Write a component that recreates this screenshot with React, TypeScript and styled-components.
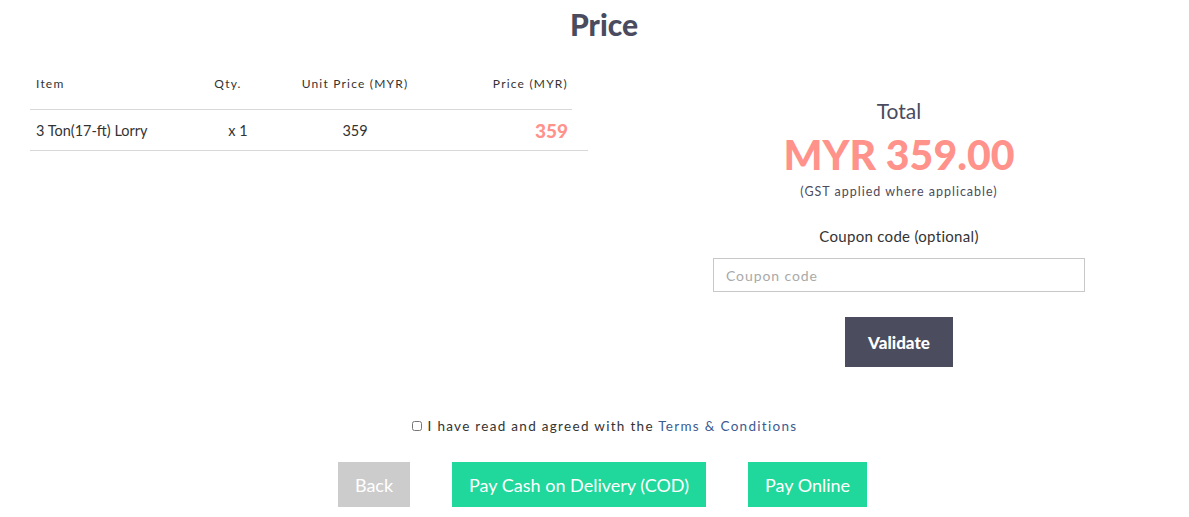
import React from "react";
import styled, { createGlobalStyle } from "styled-components";

const GlobalStyle = createGlobalStyle`
    body {
        margin: 0;
        background: #ffffff;
        font-family: "Lato", "Noto Sans", sans-serif;
        color: #333333;
    }
`;

const Page = styled.div`
    width: 1189px;
    padding-top: 6px;
`;

const Title = styled.h1`
    margin: 0;
    padding-left: 19px;
    text-align: center;
    font-size: 30px;
    font-weight: 900;
    color: #4a4b5e;
    line-height: 36px;
`;

const Main = styled.div`
    display: flex;
    margin-top: 21px;
`;

const Left = styled.div`
    width: 558px;
    margin-left: 30px;
`;

const Right = styled.div`
    flex: 1;
    padding-left: 21px;
    display: flex;
    flex-direction: column;
    align-items: center;
    padding-top: 35px;
`;

const Table = styled.div`
    display: flex;
    flex-direction: column;
`;

interface RowProps {
    lineWidth: string;
    tall?: boolean;
}
const Row = styled.div<RowProps>`
    box-sizing: border-box;
    display: grid;
    grid-template-columns: 150px 96px 158px 134px;
    align-items: center;
    width: ${(props) => props.lineWidth};
    border-bottom: 1px solid #d8d8d8;
    height: ${(props) => (props.tall ? "47px" : "41px")};
    padding-bottom: ${(props) => (props.tall ? "6px" : "0")};
`;

interface CellProps {
    align?: string;
    header?: boolean;
    strong?: boolean;
    shift?: string;
}
const Cell = styled.div<CellProps>`
    text-align: ${(props) => props.align || "left"};
    padding-left: ${(props) => props.shift || (props.align ? "0" : "6px")};
    font-size: ${(props) => (props.header ? "12px" : props.strong ? "19px" : "14.5px")};
    font-weight: ${(props) => (props.strong ? 900 : 400)};
    letter-spacing: ${(props) => (props.header ? "1.2px" : "0")};
    color: ${(props) => (props.strong ? "#ff928a" : "#333333")};
`;

const TotalLabel = styled.div`
    font-size: 21px;
    color: #4a4b5e;
    line-height: 26px;
`;

const TotalAmount = styled.div`
    font-size: 41px;
    font-weight: 900;
    color: #ff938b;
    line-height: 46px;
    margin-top: 8px;
`;

const Note = styled.div`
    font-size: 12.5px;
    letter-spacing: 1px;
    color: #4a4b5e;
    margin-top: 6px;
`;

const CouponLabel = styled.div`
    font-size: 15px;
    letter-spacing: 0.3px;
    color: #333333;
    margin-top: 28px;
`;

const CouponInput = styled.input`
    box-sizing: border-box;
    width: 372px;
    height: 34px;
    margin-top: 13px;
    border: 1px solid #c8c8c8;
    padding: 0 12px;
    font-family: inherit;
    font-size: 14px;
    letter-spacing: 0.9px;
    outline: none;
    &::placeholder {
        color: #a9a9a9;
    }
`;

const ValidateButton = styled.button`
    margin-top: 25px;
    width: 108px;
    height: 50px;
    border: none;
    background: #4b4c5e;
    color: #ffffff;
    font-family: inherit;
    font-size: 17px;
    font-weight: 900;
    cursor: pointer;
`;

const Agreement = styled.label`
    display: flex;
    justify-content: center;
    align-items: center;
    gap: 6px;
    margin-top: 51px;
    padding-left: 20px;
    font-size: 13.5px;
    letter-spacing: 1.3px;
    color: #333333;
`;

const Checkbox = styled.input`
    margin: 0;
    width: 10px;
    height: 10px;
`;

const Link = styled.a`
    color: #3b5b93;
    text-decoration: none;
`;

const Actions = styled.div`
    display: flex;
    justify-content: center;
    gap: 42px;
    margin-top: 28px;
    padding-left: 16px;
`;

interface ActionProps {
    grey?: boolean;
}
const ActionButton = styled.button<ActionProps>`
    height: 45px;
    padding: 0 17px;
    border: none;
    background: ${(props) => (props.grey ? "#cccccc" : "#20d89b")};
    color: #ffffff;
    font-family: inherit;
    font-size: 18px;
    cursor: pointer;
`;

export default function App() {
    const [coupon, setCoupon] = React.useState("");
    const [agreed, setAgreed] = React.useState(false);
    return (
        <Page>
            <GlobalStyle />
            <Title>Price</Title>
            <Main>
                <Left>
                    <Table>
                        <Row lineWidth={"542px"} tall>
                            <Cell header>Item</Cell>
                            <Cell header align={"center"}>Qty.</Cell>
                            <Cell header align={"center"}>Unit Price (MYR)</Cell>
                            <Cell header align={"right"}>Price (MYR)</Cell>
                        </Row>
                        <Row lineWidth={"558px"}>
                            <Cell>3 Ton(17-ft) Lorry</Cell>
                            <Cell align={"center"} shift={"20px"}>x 1</Cell>
                            <Cell align={"center"}>359</Cell>
                            <Cell strong align={"right"}>359</Cell>
                        </Row>
                    </Table>
                </Left>
                <Right>
                    <TotalLabel>Total</TotalLabel>
                    <TotalAmount>MYR 359.00</TotalAmount>
                    <Note>(GST applied where applicable)</Note>
                    <CouponLabel>Coupon code (optional)</CouponLabel>
                    <CouponInput
                        placeholder="Coupon code"
                        value={coupon}
                        onChange={(e) => setCoupon(e.target.value)}
                    />
                    <ValidateButton>Validate</ValidateButton>
                </Right>
            </Main>
            <Agreement>
                <Checkbox
                    type="checkbox"
                    checked={agreed}
                    onChange={() => setAgreed(!agreed)}
                />
                <span>
                    I have read and agreed with the{" "}
                    <Link href="#">Terms &amp; Conditions</Link>
                </span>
            </Agreement>
            <Actions>
                <ActionButton grey>Back</ActionButton>
                <ActionButton>Pay Cash on Delivery (COD)</ActionButton>
                <ActionButton>Pay Online</ActionButton>
            </Actions>
        </Page>
    );
}
